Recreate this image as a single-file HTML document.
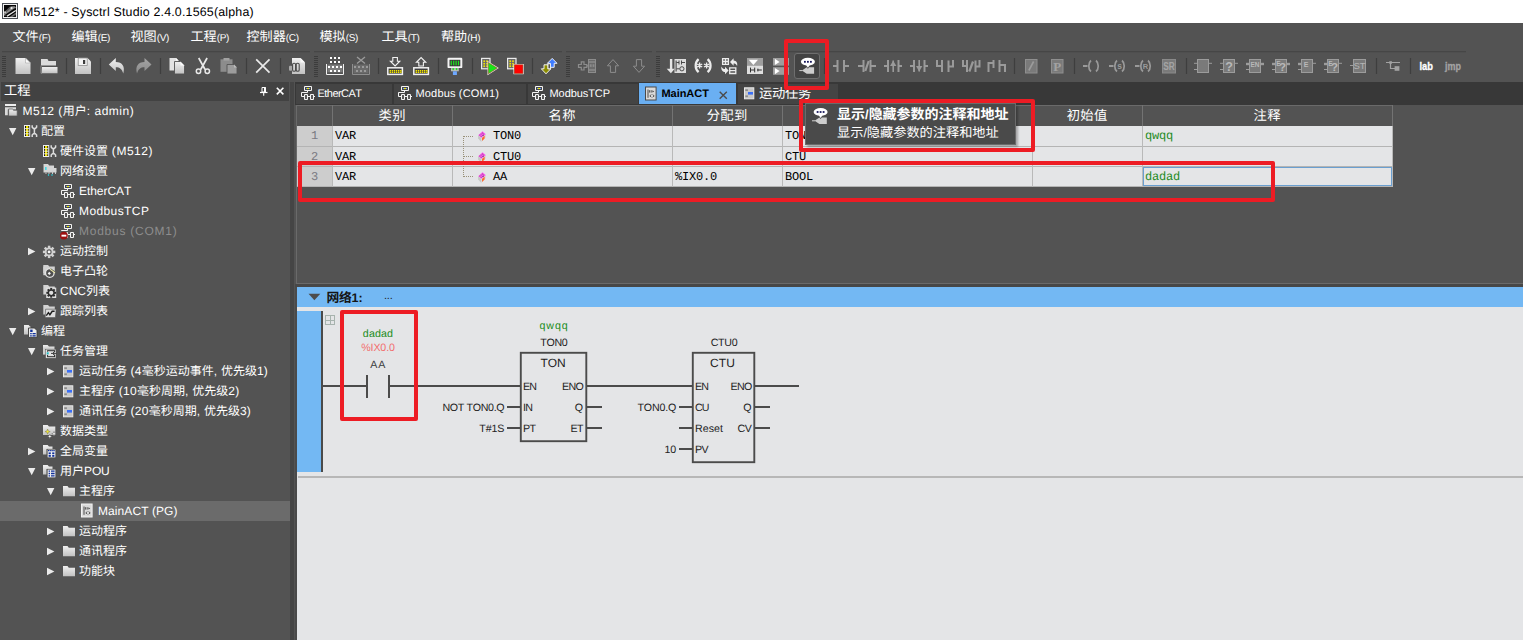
<!DOCTYPE html>
<html><head><meta charset="utf-8"><title>M512* - Sysctrl Studio</title>
<style>
html,body{margin:0;padding:0}
body{width:1523px;height:640px;overflow:hidden;background:#535353;font-family:"Liberation Sans",sans-serif;position:relative}
.a{position:absolute}
.t{position:absolute;white-space:nowrap;font-kerning:none;text-rendering:geometricPrecision}
.h{font-family:"Liberation Sans","Noto Sans CJK SC",sans-serif;letter-spacing:0}
</style></head><body>
<div class="a" style="left:0px;top:0px;width:1523px;height:23px;background:#fff;"></div><svg class="a" style="left:2px;top:3px;" width="16" height="16" viewBox="0 0 16 16"><rect x="0.5" y="0.5" width="15" height="15" fill="#f0f0f0" stroke="#4c5056"/><rect x="2" y="2" width="12" height="12" fill="#050505"/><path d="M2 10.5L9.5 3.2H12.8L14 4.6L5.5 12.6H2Z" fill="#8c8c8c"/><path d="M8 3.6L11 3.3L4 9.5L2.3 9Z" fill="#5a5a5a"/><circle cx="9.5" cy="5" r="1.1" fill="#f4f4f4"/><circle cx="3" cy="9.2" r="0.9" fill="#d8d8d8"/><path d="M3.5 12.3L13 6" stroke="#0a0a0a" stroke-width="1.5"/><path d="M5 13.3L13.8 7.6" stroke="#f2f2f2" stroke-width="1.2"/><path d="M7.5 14L14 9.5V14Z" fill="#6a6a6a"/><path d="M10.5 14L14 11.5V14Z" fill="#1a1a1a"/></svg><div class="t" style="left:23px;top:2px;height:20px;line-height:20px;font-size:12.4px;color:#000;letter-spacing:0.192px;">M512* - Sysctrl Studio 2.4.0.1565(alpha)</div><div class="t" style="left:12.5px;top:27.3px;height:20px;line-height:20px;font-size:12px;color:#fff"><span class="h" style="font-size:13.1px">文件</span><span style="font-size:10px;letter-spacing:-0.3px">(F)</span></div><div class="t" style="left:71.5px;top:27.3px;height:20px;line-height:20px;font-size:12px;color:#fff"><span class="h" style="font-size:13.1px">编辑</span><span style="font-size:10px;letter-spacing:-0.3px">(E)</span></div><div class="t" style="left:130.5px;top:27.3px;height:20px;line-height:20px;font-size:12px;color:#fff"><span class="h" style="font-size:13.1px">视图</span><span style="font-size:10px;letter-spacing:-0.3px">(V)</span></div><div class="t" style="left:190.5px;top:27.3px;height:20px;line-height:20px;font-size:12px;color:#fff"><span class="h" style="font-size:13.1px">工程</span><span style="font-size:10px;letter-spacing:-0.3px">(P)</span></div><div class="t" style="left:246.5px;top:27.3px;height:20px;line-height:20px;font-size:12px;color:#fff"><span class="h" style="font-size:13.1px">控制器</span><span style="font-size:10px;letter-spacing:-0.3px">(C)</span></div><div class="t" style="left:319.5px;top:27.3px;height:20px;line-height:20px;font-size:12px;color:#fff"><span class="h" style="font-size:13.1px">模拟</span><span style="font-size:10px;letter-spacing:-0.3px">(S)</span></div><div class="t" style="left:381.5px;top:27.3px;height:20px;line-height:20px;font-size:12px;color:#fff"><span class="h" style="font-size:13.1px">工具</span><span style="font-size:10px;letter-spacing:-0.3px">(T)</span></div><div class="t" style="left:441px;top:27.3px;height:20px;line-height:20px;font-size:12px;color:#fff"><span class="h" style="font-size:13.1px">帮助</span><span style="font-size:10px;letter-spacing:-0.3px">(H)</span></div><svg class="a" style="left:0px;top:51px;" width="1523" height="31" viewBox="0 51 1523 31"><defs><linearGradient id="lg" x1="0" y1="0" x2="0" y2="1"><stop offset="0" stop-color="#f0f0f0"/><stop offset="1" stop-color="#c2c2c2"/></linearGradient><linearGradient id="lgd" x1="0" y1="0" x2="0" y2="1"><stop offset="0" stop-color="#a5a5a5"/><stop offset="1" stop-color="#8a8a8a"/></linearGradient><linearGradient id="ai" x1="0" y1="0" x2="1" y2="1"><stop offset="0" stop-color="#000"/><stop offset="0.5" stop-color="#8a8a8a"/><stop offset="1" stop-color="#000"/></linearGradient></defs><path d="M2 51.5H310" stroke="#464646" stroke-width="1.4"/><path d="M314 51.5H562" stroke="#464646" stroke-width="1.4"/><path d="M566 51.5H652" stroke="#464646" stroke-width="1.4"/><path d="M656 51.5H1466" stroke="#464646" stroke-width="1.4"/><path d="M4 56V78" stroke="#3c3c3c" stroke-width="4" stroke-dasharray="1 1"/><path d="M316 56V78" stroke="#3c3c3c" stroke-width="4" stroke-dasharray="1 1"/><path d="M568 56V78" stroke="#3c3c3c" stroke-width="4" stroke-dasharray="1 1"/><path d="M658 56V78" stroke="#3c3c3c" stroke-width="4" stroke-dasharray="1 1"/><path d="M66.5 58V74" stroke="#3e3e3e" stroke-width="1.2"/><path d="M100.5 58V74" stroke="#3e3e3e" stroke-width="1.2"/><path d="M160.5 58V74" stroke="#3e3e3e" stroke-width="1.2"/><path d="M246.5 58V74" stroke="#3e3e3e" stroke-width="1.2"/><path d="M280.5 58V74" stroke="#3e3e3e" stroke-width="1.2"/><path d="M378.5 58V74" stroke="#3e3e3e" stroke-width="1.2"/><path d="M438.5 58V74" stroke="#3e3e3e" stroke-width="1.2"/><path d="M472.5 58V74" stroke="#3e3e3e" stroke-width="1.2"/><path d="M532.5 58V74" stroke="#3e3e3e" stroke-width="1.2"/><path d="M824.5 58V74" stroke="#3e3e3e" stroke-width="1.2"/><path d="M1014.5 58V74" stroke="#3e3e3e" stroke-width="1.2"/><path d="M1074.5 58V74" stroke="#3e3e3e" stroke-width="1.2"/><path d="M1186.5 58V74" stroke="#3e3e3e" stroke-width="1.2"/><path d="M1376.5 58V74" stroke="#3e3e3e" stroke-width="1.2"/><path d="M1410.5 58V74" stroke="#3e3e3e" stroke-width="1.2"/><g transform="translate(15.5,58)"><path d="M0 0H10L15 5V16H0Z" fill="url(#lg)"/><path d="M10 0V5H15Z" fill="#fafafa" stroke="#a8a8a8" stroke-width="0.6"/></g><g transform="translate(40.5,58)"><path d="M0.5 1H7L8 3H15.5V7.5H0.5Z" fill="#dcdcdc"/><path d="M1.5 9H17V15.3H1Z" fill="url(#lg)"/><path d="M0.5 7.5V15.3H1.5" stroke="#8a8a8a" fill="none"/></g><g transform="translate(75,58)"><path d="M0 0H12.5L16 3.5V16H0Z" fill="url(#lg)"/><rect x="3.2" y="0" width="9" height="7.5" fill="#f4f4f4" stroke="#8f8f8f" stroke-width="0.8"/><rect x="8" y="2" width="2.2" height="4" fill="#3c3c3c"/></g><g transform="translate(108.8,58)"><path d="M0 6.5L7 0V4C13.5 4 16.5 8.5 14.5 15.5C13 11 11 9.3 7 9.3V13Z" fill="url(#lg)"/></g><g transform="translate(151.5,58) scale(-1,1)"><path d="M0 6.5L7 0V4C13.5 4 16.5 8.5 14.5 15.5C13 11 11 9.3 7 9.3V13Z" fill="url(#lgd)"/></g><g transform="translate(169.5,58)"><path d="M0 0H6.5L9 2.5V12.5H0Z" fill="#e3e3e3"/><path d="M6.5 0V2.5H9Z" fill="#fff"/><path d="M5 3.5H11L15 7.5V16H5Z" fill="url(#lg)" stroke="#535353" stroke-width="0.9"/><path d="M11 3.5V7.5H15Z" fill="#fbfbfb"/></g><g transform="translate(195.5,58)"><path d="M3.2 0L9.6 11.5M11.6 0L5.2 11.5" stroke="#e9e9e9" stroke-width="1.7" fill="none"/><circle cx="3" cy="13.2" r="2.2" fill="none" stroke="#e9e9e9" stroke-width="1.5"/><circle cx="11.8" cy="13.2" r="2.2" fill="none" stroke="#e9e9e9" stroke-width="1.5"/></g><g transform="translate(220.5,58)"><rect x="0" y="1.3" width="12" height="12.5" fill="#8c8c8c"/><rect x="3" y="0" width="6" height="2.6" fill="#a2a2a2"/><path d="M6.5 6.5H13.5L16.5 9.5V16H6.5Z" fill="#9c9c9c" stroke="#535353" stroke-width="0.9"/><path d="M13.5 6.5V9.5H16.5Z" fill="#bdbdbd"/></g><g transform="translate(255.5,58.7)"><path d="M0.7 0.7L14 14M14 0.7L0.7 14" stroke="#e9e9e9" stroke-width="1.7"/></g><g transform="translate(289,58)"><path d="M3 0H11.5L16 4.5V16H3Z" fill="url(#lg)"/><path d="M11.5 0V4.5H16Z" fill="#fbfbfb"/><rect x="0" y="7.8" width="3.2" height="5" rx="1" fill="#a8a8a8"/><rect x="3.6" y="5.3" width="3" height="8" rx="1.3" fill="none" stroke="#4a4a4a" stroke-width="1.1"/><rect x="7.2" y="5.3" width="3" height="8" rx="1.3" fill="none" stroke="#4a4a4a" stroke-width="1.1"/></g><g transform="translate(326,56.5)"><rect x="4" y="0.5" width="2" height="2" fill="#fff"/><rect x="8" y="0.5" width="2" height="2" fill="#fff"/><rect x="12" y="0.5" width="2" height="2" fill="#fff"/><rect x="4" y="4.5" width="2" height="2" fill="#fff"/><rect x="8" y="4.5" width="2" height="2" fill="#fff"/><rect x="12" y="4.5" width="2" height="2" fill="#fff"/><rect x="1.5" y="8" width="15" height="9" fill="#7c7c7c"/><path d="M0.5 7.5V18H17.5V7.5" stroke="#f0f0f0" fill="none"/><path d="M1.5 16.5H16.5" stroke="#3c3c3c"/><rect x="2" y="9.5" width="2" height="2" fill="#fff"/><rect x="6" y="9.5" width="2" height="2" fill="#fff"/><rect x="10" y="9.5" width="2" height="2" fill="#fff"/><rect x="14" y="9.5" width="2" height="2" fill="#fff"/><rect x="4" y="13.5" width="2" height="2" fill="#fff"/><rect x="8" y="13.5" width="2" height="2" fill="#fff"/><rect x="12" y="13.5" width="2" height="2" fill="#fff"/></g><g transform="translate(352,56.5)"><path d="M5 0.5L13 7M13 0.5L5 7" stroke="#9c9c9c" stroke-width="1.3"/><rect x="1.5" y="8" width="15" height="9" fill="#6b6b6b"/><path d="M0.5 7.5V18H17.5V7.5" stroke="#8e8e8e" fill="none"/><rect x="2" y="9.5" width="2" height="2" fill="#9a9a9a"/><rect x="6" y="9.5" width="2" height="2" fill="#9a9a9a"/><rect x="10" y="9.5" width="2" height="2" fill="#9a9a9a"/><rect x="14" y="9.5" width="2" height="2" fill="#9a9a9a"/><rect x="4" y="13.5" width="2" height="2" fill="#9a9a9a"/><rect x="8" y="13.5" width="2" height="2" fill="#9a9a9a"/><rect x="12" y="13.5" width="2" height="2" fill="#9a9a9a"/></g><g transform="translate(387,57)"><path d="M5.8 0.5H10.4V4.2H12.8L8.1 9L3.4 4.2H5.8Z" fill="none" stroke="#f2f2f2" stroke-width="1.1"/><rect x="0.8" y="10.8" width="14.6" height="6.6" fill="#3e3e3e" stroke="#f2f2f2" stroke-width="1.5"/><rect x="2.6" y="13" width="1.4" height="1.4" fill="#f2e400"/><rect x="4.7" y="13" width="1.4" height="1.4" fill="#f2e400"/><rect x="6.8" y="13" width="1.4" height="1.4" fill="#f2e400"/><rect x="8.9" y="13" width="1.4" height="1.4" fill="#f2e400"/><rect x="11" y="13" width="1.4" height="1.4" fill="#f2e400"/><rect x="13.1" y="13" width="1.4" height="1.4" fill="#f2e400"/><rect x="2.6" y="14.6" width="1.4" height="1.4" fill="#f2e400"/><rect x="4.7" y="14.6" width="1.4" height="1.4" fill="#f2e400"/><rect x="6.8" y="14.6" width="1.4" height="1.4" fill="#f2e400"/><rect x="8.9" y="14.6" width="1.4" height="1.4" fill="#f2e400"/><rect x="11" y="14.6" width="1.4" height="1.4" fill="#f2e400"/><rect x="13.1" y="14.6" width="1.4" height="1.4" fill="#f2e400"/></g><g transform="translate(413,57)"><path d="M5.8 9H10.4V5.3H12.8L8.1 0.5L3.4 5.3H5.8Z" fill="none" stroke="#f2f2f2" stroke-width="1.1"/><rect x="0.8" y="10.8" width="14.6" height="6.6" fill="#3e3e3e" stroke="#f2f2f2" stroke-width="1.5"/><rect x="2.6" y="13" width="1.4" height="1.4" fill="#f2e400"/><rect x="4.7" y="13" width="1.4" height="1.4" fill="#f2e400"/><rect x="6.8" y="13" width="1.4" height="1.4" fill="#f2e400"/><rect x="8.9" y="13" width="1.4" height="1.4" fill="#f2e400"/><rect x="11" y="13" width="1.4" height="1.4" fill="#f2e400"/><rect x="13.1" y="13" width="1.4" height="1.4" fill="#f2e400"/><rect x="2.6" y="14.6" width="1.4" height="1.4" fill="#f2e400"/><rect x="4.7" y="14.6" width="1.4" height="1.4" fill="#f2e400"/><rect x="6.8" y="14.6" width="1.4" height="1.4" fill="#f2e400"/><rect x="8.9" y="14.6" width="1.4" height="1.4" fill="#f2e400"/><rect x="11" y="14.6" width="1.4" height="1.4" fill="#f2e400"/><rect x="13.1" y="14.6" width="1.4" height="1.4" fill="#f2e400"/></g><g transform="translate(447.5,57.8)"><rect x="0" y="0" width="14.8" height="10.3" rx="1.2" fill="#f4f4f4"/><rect x="2" y="2" width="10.8" height="6.5" fill="#3a3a3a"/><path d="M3.8 3V7.5M6.2 3V7.5M8.6 3V7.5M11 3V7.5" stroke="#1fe31f" stroke-width="1.2"/><rect x="3.5" y="10.3" width="7.8" height="3.2" fill="#b9b9b9"/><rect x="5" y="10.3" width="1.4" height="2" fill="#1fe31f"/><rect x="8.4" y="10.3" width="1.4" height="2" fill="#1fe31f"/><rect x="5.4" y="13.5" width="4" height="3.7" fill="#6ea8ff"/></g><g transform="translate(481,57.8)"><rect x="0.6" y="0.6" width="8.4" height="10.4" fill="#6a6a6a" stroke="#ececec" stroke-width="1.2"/><rect x="2.4" y="2.6" width="1.6" height="1.6" fill="#f2e400"/><rect x="5.2" y="2.6" width="1.6" height="1.6" fill="#f2e400"/><rect x="2.4" y="5.1" width="1.6" height="1.6" fill="#f2e400"/><rect x="5.2" y="5.1" width="1.6" height="1.6" fill="#f2e400"/><rect x="2.4" y="7.6" width="1.6" height="1.6" fill="#f2e400"/><rect x="5.2" y="7.6" width="1.6" height="1.6" fill="#f2e400"/><path d="M7.3 4.6L16.3 10.3L7.3 16Z" fill="#19e619" stroke="#fff" stroke-width="1.6"/><path d="M7.3 4.6L16.3 10.3L7.3 16Z" fill="#19e619" stroke="#a0401a" stroke-width="0.6"/></g><g transform="translate(507,57.8)"><rect x="0.6" y="0.6" width="8.4" height="10.4" fill="#6a6a6a" stroke="#ececec" stroke-width="1.2"/><rect x="2.4" y="2.6" width="1.6" height="1.6" fill="#f2e400"/><rect x="5.2" y="2.6" width="1.6" height="1.6" fill="#f2e400"/><rect x="2.4" y="5.1" width="1.6" height="1.6" fill="#f2e400"/><rect x="5.2" y="5.1" width="1.6" height="1.6" fill="#f2e400"/><rect x="2.4" y="7.6" width="1.6" height="1.6" fill="#f2e400"/><rect x="5.2" y="7.6" width="1.6" height="1.6" fill="#f2e400"/><rect x="7.3" y="7" width="8.6" height="8.6" fill="#ff0000" stroke="#fff" stroke-width="1.6"/><rect x="7.3" y="7" width="8.6" height="8.6" fill="#ff0000" stroke="#a0401a" stroke-width="0.6"/></g><g transform="translate(541,57.8)"><path d="M11.2 0.6L16 5.5H13.2V9.5H9.2V5.5H6.4Z" fill="#3f7cff" stroke="#fff" stroke-width="0.9"/><path d="M5 16L0.3 11H3V7H7V11H9.8Z" fill="#8c8c00" stroke="#fff" stroke-width="0.9"/><rect x="7" y="6" width="2.4" height="5" fill="#535353" stroke="#fff" stroke-width="0.8"/></g><g transform="translate(578,59)"><path d="M0.5 5.5H3.3V2.8H6V5.5H8.8V8.3H6V11H3.3V8.3H0.5ZM8.8 6.9H10" fill="none" stroke="#8c8c8c" stroke-width="1.2"/><rect x="10.5" y="0.5" width="7" height="13" fill="#6b6b6b" stroke="#8c8c8c"/><path d="M11 3H17M11 11H17" stroke="#8c8c8c" stroke-width="1.6"/><rect x="11.8" y="5.3" width="1.8" height="2.6" fill="#8c8c8c"/><rect x="14.6" y="5.3" width="1.8" height="2.6" fill="#8c8c8c"/></g><g transform="translate(607,59)"><path d="M6 0.6L11.6 6.8H8.6V13.4H3.4V6.8H0.4Z" fill="none" stroke="#8c8c8c"/></g><g transform="translate(633,59)"><path d="M6 13.4L11.6 7.2H8.6V0.6H3.4V7.2H0.4Z" fill="none" stroke="#8c8c8c"/></g><g transform="translate(666.5,59)"><path d="M4.6 0V11" stroke="#e6e6e6" stroke-width="2.4"/><path d="M0.2 9.8H8.2L4.4 14.2Z" fill="#e6e6e6"/><rect x="8" y="0" width="11.5" height="14" fill="#dcdcdc"/><path d="M9.6 1.5V12.5" stroke="#3a3a3a" stroke-width="1"/><path d="M10 3.5H12.5M12.5 1.5V5.5M15 1.5V5.5M15 3.5H18.5M10 9.8H13" stroke="#3a3a3a" stroke-width="0.9" fill="none"/><circle cx="15.4" cy="9.8" r="2.1" fill="none" stroke="#3a3a3a" stroke-width="0.9"/></g><g transform="translate(694,59)"><path d="M4.6 0.2C0.7 3.6 0.7 9.8 4.6 13.2M13.6 0.2C17.5 3.6 17.5 9.8 13.6 13.2" stroke="#ececec" stroke-width="2.3" fill="none"/><path d="M0 -2.9V2.9M-2.6 -1.5L2.6 1.5M2.6 -1.5L-2.6 1.5" transform="translate(5.6,6.5)" stroke="#ececec" stroke-width="1.4"/><path d="M0 -2.9V2.9M-2.6 -1.5L2.6 1.5M2.6 -1.5L-2.6 1.5" transform="translate(12.6,6.5)" stroke="#ececec" stroke-width="1.4"/></g><g transform="translate(721,58)"><path d="M1.6 0.6H7.4V6.4H1.6ZM4.5 0.6V6.4M1.6 3.5H7.4" stroke="#ececec" stroke-width="1.3" fill="none"/><path d="M9 4L12.6 0.3V2.4C15.6 2.6 16.8 5 16.1 7.9C15.1 5.9 14.2 5.4 12.6 5.4V7.7Z" fill="#ececec"/><path d="M7.6 12.5L4 16.2V14.1C1.2 13.9 -0.1 11.5 0.4 8.5C1.4 10.6 2.4 11.1 4 11.1V8.8Z" fill="#ececec"/><path d="M8.7 9.8H14.8V15.5H8.7ZM8.7 12.65H14.8" stroke="#ececec" stroke-width="1.3" fill="none"/></g><g transform="translate(747,58)"><rect x="0" y="0" width="16" height="7.5" fill="#9e9e9e"/><path d="M1.8 1.8H11L6.4 6.9Z" fill="#fff"/><rect x="0" y="7.5" width="16" height="8.5" fill="#dedede"/><path d="M3.5 9.6V14.4M3.5 12H7.7M7.7 9.6V14.4M10.4 12H14.8M10.9 10.6V13.4" stroke="#2e2e2e" stroke-width="1" fill="none"/></g><g transform="translate(773,58)"><rect x="0" y="0" width="16" height="7.6" fill="#9e9e9e"/><path d="M1.9 0.8V7L6.6 3.9Z" fill="#fff"/><rect x="0" y="9.2" width="16" height="7.6" fill="#9e9e9e"/><path d="M1.9 10V16.2L6.6 13.1Z" fill="#fff"/></g><rect x="794.5" y="53.5" width="25" height="25" rx="2.5" fill="#434343" stroke="#6e6e6e"/><g transform="translate(799.3,57.8)"><ellipse cx="8.6" cy="3.9" rx="7" ry="3.9" fill="#fff"/><path d="M6.3 6.5L8.6 10L11 6.5Z" fill="#fff"/><rect x="4.7" y="3.1" width="1.8" height="1.8" fill="#14145a"/><rect x="7.7" y="3.1" width="1.8" height="1.8" fill="#14145a"/><rect x="10.7" y="3.1" width="1.8" height="1.8" fill="#14145a"/><path d="M0 12.8H3" stroke="#d0d0d0" stroke-width="1"/><path d="M2.6 12.8L7.4 9.4L8.6 11L9.8 9.4H14.8V16H7.4Z" fill="#cdcdcd"/></g><g transform="translate(833,60)"><path d="M0 6H4.5M4.5 0V12M11 0V12M11 6H16" stroke="#9a9a9a" stroke-width="2" fill="none"/></g><g transform="translate(858,60)"><path d="M0 6H5.5M5.5 0V12M12.5 0V12M12.5 6H18" stroke="#9a9a9a" stroke-width="2" fill="none"/><path d="M7.3 11L10.7 1" stroke="#9a9a9a" stroke-width="2.2"/></g><g transform="translate(884,60)"><path d="M0 6H4M4 0V12M14.5 0V12M14.5 6H18" stroke="#9a9a9a" stroke-width="2" fill="none"/><path d="M9.2 0.5V12" stroke="#9a9a9a" stroke-width="1.6"/><path d="M6 6L9.2 0.8L12.4 6Z" fill="#9a9a9a"/></g><g transform="translate(910,60)"><path d="M0 6H4M4 0V12M14.5 0V12M14.5 6H18" stroke="#9a9a9a" stroke-width="2" fill="none"/><path d="M9.2 0V11.5" stroke="#9a9a9a" stroke-width="1.6"/><path d="M6 6L9.2 11.5L12.4 6Z" fill="#9a9a9a"/></g><g transform="translate(936,60)"><path d="M1 0V6H6M6 0V12M12.5 0.5V12M12.5 6.5H17V0" stroke="#9a9a9a" stroke-width="2" fill="none"/></g><g transform="translate(962,60)"><path d="M1 0V6H5M5 0V12M13.5 0.5V12M13.5 6.5H17.5V0" stroke="#9a9a9a" stroke-width="2" fill="none"/><path d="M7.3 11.5L11 1.5" stroke="#9a9a9a" stroke-width="2.2"/></g><g transform="translate(987.5,60)"><path d="M1 12V3H6M6 0V8M12 0V12M12 5H17.5V12" stroke="#9a9a9a" stroke-width="2" fill="none"/></g><g transform="translate(1025,59)"><rect x="0.5" y="0.5" width="11.5" height="13.5" fill="#7a7a7a" stroke="#8f8f8f"/><path d="M3.8 11.5L8.6 2.5" stroke="#9c9c9c" stroke-width="1.6"/></g><g transform="translate(1051,59)"><rect x="0.5" y="0.5" width="11.5" height="13.5" fill="#7a7a7a" stroke="#8f8f8f"/><text x="6.3" y="11.6" font-family="Liberation Serif" font-weight="bold" font-size="13" fill="#a2a2a2" text-anchor="middle">P</text></g><g transform="translate(1083,59.5)"><path d="M0 6.5H4.5" stroke="#9a9a9a" stroke-width="2"/><path d="M8 1C5 3.5 5 9.5 8 12M13 1C16 3.5 16 9.5 13 12" stroke="#9a9a9a" stroke-width="1.7" fill="none"/></g><g transform="translate(1109,59.5)"><path d="M0 6.5H4.5" stroke="#9a9a9a" stroke-width="2"/><path d="M8 1C5 3.5 5 9.5 8 12M13 1C16 3.5 16 9.5 13 12" stroke="#9a9a9a" stroke-width="1.7" fill="none"/><text x="10.5" y="9.6" font-family="Liberation Sans" font-weight="bold" font-size="8.5" fill="#9a9a9a" text-anchor="middle">s</text></g><g transform="translate(1135,59.5)"><path d="M0 6.5H4.5" stroke="#9a9a9a" stroke-width="2"/><path d="M8 1C5 3.5 5 9.5 8 12M13 1C16 3.5 16 9.5 13 12" stroke="#9a9a9a" stroke-width="1.7" fill="none"/><text x="10.5" y="9.4" font-family="Liberation Sans" font-weight="bold" font-size="7.5" fill="#9a9a9a" text-anchor="middle">R</text></g><g transform="translate(1162,59)"><rect x="0.5" y="0.5" width="13" height="13.5" fill="#7a7a7a" stroke="#8a8a8a"/><text x="7" y="11" font-family="Liberation Sans" font-weight="bold" font-size="10.5" fill="#a4a4a4" text-anchor="middle" textLength="11.5" lengthAdjust="spacingAndGlyphs">SR</text></g><g transform="translate(1194,59)"><rect x="3.5" y="0.5" width="11" height="13" fill="#7a7a7a" stroke="#9c9c9c"/><path d="M0 4.3 H3.5" stroke="#9c9c9c" stroke-width="1"/><path d="M0 10.5H3.5" stroke="#9c9c9c"/><path d="M14.5 4.3H18" stroke="#9c9c9c" stroke-width="1"/></g><g transform="translate(1220,59)"><rect x="3.5" y="0.5" width="11" height="13" fill="#7a7a7a" stroke="#9c9c9c"/><path d="M0 4.3 H3.5" stroke="#9c9c9c" stroke-width="1"/><path d="M0 10.5H3.5" stroke="#9c9c9c"/><path d="M14.5 4.3H18" stroke="#9c9c9c" stroke-width="1"/><text x="9" y="11.8" font-family="Liberation Sans" font-size="12.5" fill="#b8b8b8" text-anchor="middle" font-weight="bold">?</text></g><g transform="translate(1246,59)"><rect x="3.5" y="0.5" width="11" height="13" fill="#7a7a7a" stroke="#9c9c9c"/><path d="M0 5 H3.5" stroke="#9c9c9c" stroke-width="2.4"/><path d="M0 10.5H3.5" stroke="#9c9c9c"/><path d="M14.5 5H18" stroke="#9c9c9c" stroke-width="2.4"/><text x="9" y="7.6" font-family="Liberation Sans" font-size="6.5" fill="#b8b8b8" text-anchor="middle" font-weight="bold">EN</text></g><g transform="translate(1272,59)"><rect x="3.5" y="0.5" width="11" height="13" fill="#7a7a7a" stroke="#9c9c9c"/><path d="M0 5 H3.5" stroke="#9c9c9c" stroke-width="2.4"/><path d="M0 10.5H3.5" stroke="#9c9c9c"/><path d="M14.5 5H18" stroke="#9c9c9c" stroke-width="2.4"/><text x="6.3" y="7.3" font-family="Liberation Sans" font-size="6.5" fill="#b8b8b8" text-anchor="middle" font-weight="bold">E</text><text x="10.6" y="12.2" font-family="Liberation Sans" font-size="11.5" fill="#b8b8b8" text-anchor="middle" font-weight="bold">?</text></g><g transform="translate(1298,59)"><rect x="3.5" y="0.5" width="11" height="13" fill="#7a7a7a" stroke="#9c9c9c"/><path d="M0 5 H3.5" stroke="#9c9c9c" stroke-width="2.4"/><path d="M0 10.5H3.5" stroke="#9c9c9c"/><path d="M14.5 4.3H18" stroke="#9c9c9c" stroke-width="1"/><text x="8" y="7.8" font-family="Liberation Sans" font-size="7" fill="#b8b8b8" text-anchor="middle" font-weight="bold">E</text></g><g transform="translate(1324,59)"><rect x="3.5" y="0.5" width="11" height="13" fill="#7a7a7a" stroke="#9c9c9c"/><path d="M0 5 H3.5" stroke="#9c9c9c" stroke-width="2.4"/><path d="M0 10.5H3.5" stroke="#9c9c9c"/><path d="M14.5 4.3H18" stroke="#9c9c9c" stroke-width="1"/><text x="6.3" y="7.3" font-family="Liberation Sans" font-size="6.5" fill="#b8b8b8" text-anchor="middle" font-weight="bold">E</text><text x="10.6" y="12.2" font-family="Liberation Sans" font-size="11.5" fill="#b8b8b8" text-anchor="middle" font-weight="bold">?</text></g><g transform="translate(1350,59)"><path d="M0 6.5H3.5" stroke="#9c9c9c"/><rect x="3.5" y="0.5" width="12" height="13" fill="#7a7a7a" stroke="#9c9c9c"/><text x="9.5" y="10.3" font-family="Liberation Sans" font-size="9.5" fill="#b4b4b4" text-anchor="middle">ST</text></g><g transform="translate(1386,61)"><path d="M0 1.5H14M4.5 1.5V7.5H9" stroke="#a2a2a2" fill="none" stroke-width="1.2"/><rect x="3.3" y="0.2" width="2.6" height="2.6" fill="#a2a2a2"/><rect x="8.6" y="5.2" width="4.8" height="4.6" fill="#a2a2a2"/></g><text x="1419.5" y="70.3" font-family="Liberation Sans" font-weight="bold" font-size="11.5" fill="#fff" stroke="#fff" stroke-width="0.3" textLength="13.5" lengthAdjust="spacingAndGlyphs">lab</text><text x="1445" y="69.8" font-family="Liberation Sans" font-weight="bold" font-size="11" fill="#a3a3a3" stroke="#a3a3a3" stroke-width="0.3" textLength="16" lengthAdjust="spacingAndGlyphs">jmp</text></svg><div class="a" style="left:1px;top:82px;width:288px;height:19px;background:#424242;"></div><div class="t" style="left:4px;top:81px;height:19px;line-height:19px;font-size:13.3px;color:#fff;"><span class="h">工程</span></div><svg class="a" style="left:259.8px;top:87px;" width="8" height="9" viewBox="0 0 8 9"><path d="M2 0.5H5.5V5H2Z" fill="none" stroke="#fff" stroke-width="1"/><rect x="4" y="0.5" width="2" height="4.5" fill="#fff"/><path d="M0 5.5H7.5" stroke="#fff" stroke-width="1.2"/><path d="M3.7 6V8.8" stroke="#fff" stroke-width="1.1"/></svg><svg class="a" style="left:276px;top:86.5px;" width="10" height="10" viewBox="0 0 10 10"><path d="M0.8 0.8L7.4 7.4M7.4 0.8L0.8 7.4" stroke="#fff" stroke-width="1.6"/></svg><div class="a" style="left:290px;top:82px;width:4px;height:558px;background:#454545;"></div><div class="a" style="left:296px;top:105px;width:1px;height:178px;background:#6a6a6a;"></div><svg class="a" style="left:5px;top:103px;overflow:visible" width="17" height="17" viewBox="0 0 17 17"><rect x="0" y="1" width="11" height="2" fill="#efefef"/><path d="M0 4.2H11V6.5H2.8V12.3H0Z" fill="#dadada"/><path d="M3.6 6H7.4L8.6 7.2H12.2V13H3.6Z" fill="url(#lg)" stroke="#535353" stroke-width="0.7"/></svg><div class="t" style="left:22.5px;top:100.5px;height:20px;line-height:20px;font-size:12px;color:#fff;letter-spacing:0.493px;">M512 (<span class="h">用户</span>: admin)</div><svg class="a" style="left:9px;top:121px;" width="12" height="20" viewBox="0 0 12 20"><path d="M0 7H7.4L3.7 14.2Z" fill="#ebebeb"/></svg><svg class="a" style="left:24px;top:123px;overflow:visible" width="17" height="17" viewBox="0 0 17 17"><g transform="translate(0,1)"><rect x="0.5" y="1.5" width="5.2" height="11" fill="#111" stroke="#efefef"/><rect x="2" y="2" width="2.3" height="10" fill="#f2e400"/><path d="M1 4.6H5.3M1 7.2H5.3M1 9.8H5.3" stroke="#efefef" stroke-width="0.9"/><path d="M8.2 1.2V3.2L9.4 4.4H11.4L12.6 3.2V1.2M10.4 4.4V9.8M8.2 13V11L9.4 9.8H11.4L12.6 11V13" stroke="#dcdcdc" stroke-width="1.5" fill="none"/></g></svg><div class="t" style="left:41px;top:120.5px;height:20px;line-height:20px;font-size:12px;color:#fff;"><span class="h">配置</span></div><svg class="a" style="left:43px;top:143px;overflow:visible" width="17" height="17" viewBox="0 0 17 17"><g transform="translate(0,1)"><rect x="0.5" y="1.5" width="5.2" height="11" fill="#111" stroke="#efefef"/><rect x="2" y="2" width="2.3" height="10" fill="#f2e400"/><path d="M1 4.6H5.3M1 7.2H5.3M1 9.8H5.3" stroke="#efefef" stroke-width="0.9"/><path d="M8.2 1.2V3.2L9.4 4.4H11.4L12.6 3.2V1.2M10.4 4.4V9.8M8.2 13V11L9.4 9.8H11.4L12.6 11V13" stroke="#dcdcdc" stroke-width="1.5" fill="none"/></g></svg><div class="t" style="left:60px;top:140.5px;height:20px;line-height:20px;font-size:12px;color:#fff;letter-spacing:0.522px;"><span class="h">硬件设置</span> (M512)</div><svg class="a" style="left:28px;top:161px;" width="12" height="20" viewBox="0 0 12 20"><path d="M0 7H7.4L3.7 14.2Z" fill="#ebebeb"/></svg><svg class="a" style="left:43px;top:163px;overflow:visible" width="17" height="17" viewBox="0 0 17 17"><path d="M0.5 1H5L6.2 2.6H11V5H13.5V9.5H0.5Z" fill="#d6d6d6"/><rect x="2.2" y="4" width="1.3" height="3" fill="#29d7e6"/><path d="M3 9.5V11M6 8.5V11M9.5 8.5V11M12.5 9V11" stroke="#c8c8c8"/><path d="M5.5 11.2V12.8M9 11.2V12.8" stroke="#29d7e6" stroke-width="1.2"/></svg><div class="t" style="left:60px;top:160.5px;height:20px;line-height:20px;font-size:12px;color:#fff;"><span class="h">网络设置</span></div><svg class="a" style="left:62px;top:183px;overflow:visible" width="17" height="17" viewBox="0 0 17 17"><g transform="translate(-1,1)"><path d="M3.5 0.5H10.5V4.5H3.5Z" fill="#4a4a4a" stroke="#f4f4f4"/><rect x="5" y="2" width="4" height="1" fill="#6ea0ff"/><rect x="6" y="2" width="2" height="1" fill="#f4ec00"/><path d="M6.5 5V6.5H0.5V10.5H3" stroke="#f4f4f4" fill="none"/><path d="M3.5 8.5H6.5V13.5H3.5ZM9.5 8.5H12.5V13.5H9.5Z" fill="#5a5a5a" stroke="#f4f4f4"/><path d="M7 10.5H9M13 10.5H14" stroke="#f4f4f4"/></g></svg><div class="t" style="left:79px;top:180.5px;height:20px;line-height:20px;font-size:12px;color:#fff;letter-spacing:-0.048px;">EtherCAT</div><svg class="a" style="left:62px;top:203px;overflow:visible" width="17" height="17" viewBox="0 0 17 17"><g transform="translate(-1,1)"><path d="M3.5 0.5H10.5V4.5H3.5Z" fill="#4a4a4a" stroke="#f4f4f4"/><rect x="5" y="2" width="4" height="1" fill="#6ea0ff"/><rect x="6" y="2" width="2" height="1" fill="#f4ec00"/><path d="M6.5 5V6.5H0.5V10.5H3" stroke="#f4f4f4" fill="none"/><path d="M3.5 8.5H6.5V13.5H3.5ZM9.5 8.5H12.5V13.5H9.5Z" fill="#5a5a5a" stroke="#f4f4f4"/><path d="M7 10.5H9M13 10.5H14" stroke="#f4f4f4"/></g></svg><div class="t" style="left:79px;top:200.5px;height:20px;line-height:20px;font-size:12px;color:#fff;letter-spacing:0.401px;">ModbusTCP</div><svg class="a" style="left:62px;top:223px;overflow:visible" width="17" height="17" viewBox="0 0 17 17"><g transform="translate(-1,1)"><path d="M3.5 0.5H10.5V4.5H3.5Z" fill="#4a4a4a" stroke="#f4f4f4"/><rect x="5" y="2" width="4" height="1" fill="#6ea0ff"/><rect x="6" y="2" width="2" height="1" fill="#f4ec00"/><path d="M6.5 5V6.5H0.5V10.5H3" stroke="#f4f4f4" fill="none"/><path d="M3.5 8.5H6.5V13.5H3.5ZM9.5 8.5H12.5V13.5H9.5Z" fill="#5a5a5a" stroke="#f4f4f4"/><path d="M7 10.5H9M13 10.5H14" stroke="#f4f4f4"/></g><rect x="-2" y="8" width="6.5" height="9" fill="#535353"/><circle cx="1.9" cy="12.6" r="3.9" fill="#9c0f0f"/><rect x="-0.5" y="11.7" width="4.8" height="1.9" fill="#fff"/></svg><div class="t" style="left:79px;top:220.5px;height:20px;line-height:20px;font-size:12px;color:#8d8d8d;letter-spacing:0.755px;">Modbus (COM1)</div><svg class="a" style="left:28px;top:241px;" width="12" height="20" viewBox="0 0 12 20"><path d="M0 6.8V14.2L7.4 10.5Z" fill="#ebebeb"/></svg><svg class="a" style="left:43px;top:243px;overflow:visible" width="17" height="17" viewBox="0 0 17 17"><g transform="translate(6.1,8.9)"><rect x="-1.25" y="-6.2" width="2.5" height="3" fill="#d2d2d2" transform="rotate(0)"/><rect x="-1.25" y="-6.2" width="2.5" height="3" fill="#d2d2d2" transform="rotate(45)"/><rect x="-1.25" y="-6.2" width="2.5" height="3" fill="#d2d2d2" transform="rotate(90)"/><rect x="-1.25" y="-6.2" width="2.5" height="3" fill="#d2d2d2" transform="rotate(135)"/><rect x="-1.25" y="-6.2" width="2.5" height="3" fill="#d2d2d2" transform="rotate(180)"/><rect x="-1.25" y="-6.2" width="2.5" height="3" fill="#d2d2d2" transform="rotate(225)"/><rect x="-1.25" y="-6.2" width="2.5" height="3" fill="#d2d2d2" transform="rotate(270)"/><rect x="-1.25" y="-6.2" width="2.5" height="3" fill="#d2d2d2" transform="rotate(315)"/><circle r="4.4" fill="#d2d2d2"/><circle r="2" fill="#f4f4f4" stroke="#5a5a5a" stroke-width="1.1"/></g></svg><div class="t" style="left:60px;top:240.5px;height:20px;line-height:20px;font-size:12px;color:#fff;"><span class="h">运动控制</span></div><svg class="a" style="left:43px;top:263px;overflow:visible" width="17" height="17" viewBox="0 0 17 17"><g transform="translate(0,1)"><path d="M0.3 1H5L6.4 2.6H11.8V9H0.3Z" fill="#d2d2d2"/><path d="M0.3 2.6V11.3H3" fill="none" stroke="#d2d2d2" stroke-width="0.01"/><rect x="0.3" y="2.6" width="3" height="8.6" fill="#d2d2d2"/><circle cx="6.8" cy="9" r="4.3" fill="#4e4e4e" stroke="#e2e2e2" stroke-width="1.3"/><path d="M7.2 5.2L12 8.6" stroke="#eeeaa8" stroke-width="1.5"/><path d="M7.6 4.6L12.4 8" stroke="#4e4e4e" stroke-width="0.8"/><path d="M6.3 7.8L7.9 9.4L6.3 11L4.7 9.4Z" fill="#f4f4f4"/></g></svg><div class="t" style="left:60px;top:260.5px;height:20px;line-height:20px;font-size:12px;color:#fff;"><span class="h">电子凸轮</span></div><svg class="a" style="left:43px;top:283px;overflow:visible" width="17" height="17" viewBox="0 0 17 17"><g transform="translate(0,1)"><path d="M0.3 1H5L6.4 2.6H11.8V10.5H0.3Z" fill="#d2d2d2"/><rect x="3.2" y="3.6" width="10" height="10.4" fill="#dedede"/><g transform="translate(8.2,8.8)"><rect x="-1" y="-4.9" width="2" height="2" fill="#2e2e2e" transform="rotate(0)"/><rect x="-1" y="-4.9" width="2" height="2" fill="#2e2e2e" transform="rotate(45)"/><rect x="-1" y="-4.9" width="2" height="2" fill="#2e2e2e" transform="rotate(90)"/><rect x="-1" y="-4.9" width="2" height="2" fill="#2e2e2e" transform="rotate(135)"/><rect x="-1" y="-4.9" width="2" height="2" fill="#2e2e2e" transform="rotate(180)"/><rect x="-1" y="-4.9" width="2" height="2" fill="#2e2e2e" transform="rotate(225)"/><rect x="-1" y="-4.9" width="2" height="2" fill="#2e2e2e" transform="rotate(270)"/><rect x="-1" y="-4.9" width="2" height="2" fill="#2e2e2e" transform="rotate(315)"/><circle r="2.9" fill="#dedede" stroke="#2e2e2e" stroke-width="1.5"/></g></g></svg><div class="t" style="left:60px;top:280.5px;height:20px;line-height:20px;font-size:12px;color:#fff;letter-spacing:0.001px;">CNC<span class="h">列表</span></div><svg class="a" style="left:28px;top:301px;" width="12" height="20" viewBox="0 0 12 20"><path d="M0 6.8V14.2L7.4 10.5Z" fill="#ebebeb"/></svg><svg class="a" style="left:43px;top:303px;overflow:visible" width="17" height="17" viewBox="0 0 17 17"><g transform="translate(0,1)"><path d="M0.3 1H5L6.4 2.6H11.8V10.5H0.3Z" fill="#d2d2d2"/><path d="M2.6 5.2H13.2L12.4 13.6H2.2Z" fill="#dcdcdc" stroke="#535353" stroke-width="0.6"/><path d="M3.3 11.6L5.4 8.7L6.9 10.7L9.2 7.3H11.6" stroke="#1c1c1c" stroke-width="1.4" fill="none"/></g></svg><div class="t" style="left:60px;top:300.5px;height:20px;line-height:20px;font-size:12px;color:#fff;"><span class="h">跟踪列表</span></div><svg class="a" style="left:9px;top:321px;" width="12" height="20" viewBox="0 0 12 20"><path d="M0 7H7.4L3.7 14.2Z" fill="#ebebeb"/></svg><svg class="a" style="left:24px;top:323px;overflow:visible" width="17" height="17" viewBox="0 0 17 17"><g transform="translate(0,1)"><path d="M0 1H4.6L6 2.6H6.5V10.5H0Z" fill="url(#lg)"/><path d="M4.5 4H10.5L13 6.5V13.4H4.5Z" fill="#ececec" stroke="#3a3a3a" stroke-width="0.9"/><rect x="6.2" y="5.6" width="2.4" height="2.4" fill="#10309c"/><rect x="6.2" y="9" width="1.5" height="1.3" fill="#10309c"/><rect x="8.5" y="9" width="3.2" height="1.3" fill="#10309c"/><rect x="6.2" y="11.2" width="1.5" height="1.3" fill="#10309c"/><rect x="8.5" y="11.2" width="3.2" height="1.3" fill="#10309c"/></g></svg><div class="t" style="left:41px;top:320.5px;height:20px;line-height:20px;font-size:12px;color:#fff;"><span class="h">编程</span></div><svg class="a" style="left:28px;top:341px;" width="12" height="20" viewBox="0 0 12 20"><path d="M0 7H7.4L3.7 14.2Z" fill="#ebebeb"/></svg><svg class="a" style="left:43px;top:343px;overflow:visible" width="17" height="17" viewBox="0 0 17 17"><g transform="translate(0,1)"><path d="M0 1H4.6L6 2.6H11.5V6H0Z" fill="url(#lg)"/><rect x="0" y="5" width="3.2" height="5.6" fill="#cfcfcf"/><rect x="2.6" y="5.2" width="10.4" height="9" fill="#e2e2e2" stroke="#535353" stroke-width="0.5"/><rect x="4.6" y="6.7" width="7" height="6" fill="none" stroke="#2a2a2a" stroke-width="1"/><rect x="3.4" y="8" width="2.6" height="2.6" fill="#1cc0c8" stroke="#e2e2e2" stroke-width="0.6"/><path d="M8 9.4H11M10 8L11.6 9.4L10 10.8" stroke="#2a2a2a" stroke-width="0.9" fill="none"/><rect x="11" y="8.3" width="2" height="2.2" fill="#e2e2e2"/><path d="M10.6 9.4H13.4" stroke="#2a2a2a" stroke-width="0.9"/></g></svg><div class="t" style="left:60px;top:340.5px;height:20px;line-height:20px;font-size:12px;color:#fff;"><span class="h">任务管理</span></div><svg class="a" style="left:47px;top:361px;" width="12" height="20" viewBox="0 0 12 20"><path d="M0 6.8V14.2L7.4 10.5Z" fill="#ebebeb"/></svg><svg class="a" style="left:62px;top:363px;overflow:visible" width="17" height="17" viewBox="0 0 17 17"><g transform="translate(1,2.3)"><rect x="0.5" y="0.5" width="9.3" height="11" fill="#c7c7c7" stroke="#e9e9e9"/><rect x="1.3" y="2" width="2.6" height="1.7" fill="#8a8a8a"/><rect x="1.3" y="8.1" width="2.6" height="1.7" fill="#8a8a8a"/><rect x="4" y="4.7" width="5" height="2.6" fill="#3a6ff7"/></g></svg><div class="t" style="left:79px;top:360.5px;height:20px;line-height:20px;font-size:12px;color:#fff;letter-spacing:0.237px;"><span class="h">运动任务</span> (4<span class="h">毫秒运动事件</span>, <span class="h">优先级</span>1)</div><svg class="a" style="left:47px;top:381px;" width="12" height="20" viewBox="0 0 12 20"><path d="M0 6.8V14.2L7.4 10.5Z" fill="#ebebeb"/></svg><svg class="a" style="left:62px;top:383px;overflow:visible" width="17" height="17" viewBox="0 0 17 17"><g transform="translate(1,2.3)"><rect x="0.5" y="0.5" width="9.3" height="11" fill="#c7c7c7" stroke="#e9e9e9"/><rect x="1.3" y="2" width="2.6" height="1.7" fill="#8a8a8a"/><rect x="1.3" y="8.1" width="2.6" height="1.7" fill="#8a8a8a"/><rect x="4" y="4.7" width="5" height="2.6" fill="#3a6ff7"/></g></svg><div class="t" style="left:79px;top:380.5px;height:20px;line-height:20px;font-size:12px;color:#fff;letter-spacing:0.298px;"><span class="h">主程序</span> (10<span class="h">毫秒周期</span>, <span class="h">优先级</span>2)</div><svg class="a" style="left:47px;top:401px;" width="12" height="20" viewBox="0 0 12 20"><path d="M0 6.8V14.2L7.4 10.5Z" fill="#ebebeb"/></svg><svg class="a" style="left:62px;top:403px;overflow:visible" width="17" height="17" viewBox="0 0 17 17"><g transform="translate(1,2.3)"><rect x="0.5" y="0.5" width="9.3" height="11" fill="#c7c7c7" stroke="#e9e9e9"/><rect x="1.3" y="2" width="2.6" height="1.7" fill="#8a8a8a"/><rect x="1.3" y="8.1" width="2.6" height="1.7" fill="#8a8a8a"/><rect x="4" y="4.7" width="5" height="2.6" fill="#3a6ff7"/></g></svg><div class="t" style="left:79px;top:400.5px;height:20px;line-height:20px;font-size:12px;color:#fff;letter-spacing:0.248px;"><span class="h">通讯任务</span> (20<span class="h">毫秒周期</span>, <span class="h">优先级</span>3)</div><svg class="a" style="left:43px;top:423px;overflow:visible" width="17" height="17" viewBox="0 0 17 17"><g transform="translate(0,1)"><path d="M0 1H4.6L6 2.6H12.3V11H0Z" fill="url(#lg)"/><path d="M0 -2.6L0.7 -0.7L2.6 0L0.7 0.7L0 2.6L-0.7 0.7L-2.6 0L-0.7 -0.7Z" transform="translate(4.6,7.6)" fill="#f2e63c" stroke="#6a6a30" stroke-width="0.4"/><path d="M0 -2.6L0.7 -0.7L2.6 0L0.7 0.7L0 2.6L-0.7 0.7L-2.6 0L-0.7 -0.7Z" transform="translate(11,9.8) scale(0.9)" fill="#fff" stroke="#535353" stroke-width="0.5"/><path d="M0 -2.6L0.7 -0.7L2.6 0L0.7 0.7L0 2.6L-0.7 0.7L-2.6 0L-0.7 -0.7Z" transform="translate(6.8,12.4) scale(0.9)" fill="#fff" stroke="#535353" stroke-width="0.5"/></g></svg><div class="t" style="left:60px;top:420.5px;height:20px;line-height:20px;font-size:12px;color:#fff;"><span class="h">数据类型</span></div><svg class="a" style="left:28px;top:441px;" width="12" height="20" viewBox="0 0 12 20"><path d="M0 6.8V14.2L7.4 10.5Z" fill="#ebebeb"/></svg><svg class="a" style="left:43px;top:443px;overflow:visible" width="17" height="17" viewBox="0 0 17 17"><g transform="translate(0,1)"><path d="M0 1H4.6L6 2.6H9.5V5H3.5V10.5H0Z" fill="url(#lg)"/><rect x="4.2" y="5.2" width="8.6" height="8.6" fill="#efefef" stroke="#4a4a4a" stroke-width="0.6"/><path d="M5 6.7H12" stroke="#10309c" stroke-width="1.3" stroke-dasharray="1.5 0.6"/><rect x="5.6" y="8.4" width="2.2" height="1.8" fill="#10309c"/><rect x="9.2" y="8.4" width="2.2" height="1.8" fill="#10309c"/><rect x="5.6" y="11" width="2.2" height="1.8" fill="#10309c"/><rect x="9.2" y="11" width="2.2" height="1.8" fill="#10309c"/></g></svg><div class="t" style="left:60px;top:440.5px;height:20px;line-height:20px;font-size:12px;color:#fff;"><span class="h">全局变量</span></div><svg class="a" style="left:28px;top:461px;" width="12" height="20" viewBox="0 0 12 20"><path d="M0 7H7.4L3.7 14.2Z" fill="#ebebeb"/></svg><svg class="a" style="left:43px;top:463px;overflow:visible" width="17" height="17" viewBox="0 0 17 17"><g transform="translate(0,1)"><path d="M0 1H4.6L6 2.6H9.5V5H3.5V10.5H0Z" fill="url(#lg)"/><rect x="4.2" y="5.2" width="8.6" height="8.6" fill="#efefef" stroke="#4a4a4a" stroke-width="0.6"/><path d="M5.6 7.2H7M8 7.2H11.6M5.6 9.5H7M8 9.5H11.6M5.6 11.8H7M8 11.8H11.6" stroke="#10309c" stroke-width="1.3"/></g></svg><div class="t" style="left:60px;top:460.5px;height:20px;line-height:20px;font-size:12px;color:#fff;letter-spacing:-0.135px;"><span class="h">用户</span>POU</div><svg class="a" style="left:47px;top:481px;" width="12" height="20" viewBox="0 0 12 20"><path d="M0 7H7.4L3.7 14.2Z" fill="#ebebeb"/></svg><svg class="a" style="left:62px;top:483px;overflow:visible" width="17" height="17" viewBox="0 0 17 17"><path d="M1 3H5.5L6.8 4.8H13V13.2H1Z" fill="url(#lg)"/></svg><div class="t" style="left:79px;top:480.5px;height:20px;line-height:20px;font-size:12px;color:#fff;"><span class="h">主程序</span></div><div class="a" style="left:0px;top:501px;width:290px;height:20px;background:#6b6b6b;"></div><svg class="a" style="left:81px;top:503px;overflow:visible" width="17" height="17" viewBox="0 0 17 17"><rect x="0.5" y="1" width="10.6" height="13" fill="#dadada" stroke="#f2f2f2" stroke-width="1"/><path d="M3 3.5V11.8" stroke="#4a4a4a" stroke-width="1"/><path d="M4.6 4.2V6.6M6.2 4.2V6.6" stroke="#4a4a4a" stroke-width="0.9"/><path d="M7.4 4.2V6.6L9.2 5.4Z" fill="#4a4a4a"/><path d="M6.4 8.6L4.8 9.9L6.4 11.2M7.6 8.6L9.2 9.9L7.6 11.2" stroke="#4a4a4a" stroke-width="0.9" fill="none"/></svg><div class="t" style="left:98px;top:500.5px;height:20px;line-height:20px;font-size:12px;color:#fff;letter-spacing:0.077px;">MainACT (PG)</div><svg class="a" style="left:47px;top:521px;" width="12" height="20" viewBox="0 0 12 20"><path d="M0 6.8V14.2L7.4 10.5Z" fill="#ebebeb"/></svg><svg class="a" style="left:62px;top:523px;overflow:visible" width="17" height="17" viewBox="0 0 17 17"><path d="M1 3H5.5L6.8 4.8H13V13.2H1Z" fill="url(#lg)"/></svg><div class="t" style="left:79px;top:520.5px;height:20px;line-height:20px;font-size:12px;color:#fff;"><span class="h">运动程序</span></div><svg class="a" style="left:47px;top:541px;" width="12" height="20" viewBox="0 0 12 20"><path d="M0 6.8V14.2L7.4 10.5Z" fill="#ebebeb"/></svg><svg class="a" style="left:62px;top:543px;overflow:visible" width="17" height="17" viewBox="0 0 17 17"><path d="M1 3H5.5L6.8 4.8H13V13.2H1Z" fill="url(#lg)"/></svg><div class="t" style="left:79px;top:540.5px;height:20px;line-height:20px;font-size:12px;color:#fff;"><span class="h">通讯程序</span></div><svg class="a" style="left:47px;top:561px;" width="12" height="20" viewBox="0 0 12 20"><path d="M0 6.8V14.2L7.4 10.5Z" fill="#ebebeb"/></svg><svg class="a" style="left:62px;top:563px;overflow:visible" width="17" height="17" viewBox="0 0 17 17"><path d="M1 3H5.5L6.8 4.8H13V13.2H1Z" fill="url(#lg)"/></svg><div class="t" style="left:79px;top:560.5px;height:20px;line-height:20px;font-size:12px;color:#fff;"><span class="h">功能块</span></div><div class="a" style="left:295px;top:82px;width:1228px;height:23px;background:#383838;"></div><div class="a" style="left:296px;top:83.5px;width:96px;height:20px;background:#444444;"></div><svg class="a" style="left:302px;top:85px;overflow:visible" width="17" height="17" viewBox="0 0 17 17"><g transform="translate(-1,1)"><path d="M3.5 0.5H10.5V4.5H3.5Z" fill="#4a4a4a" stroke="#f4f4f4"/><rect x="5" y="2" width="4" height="1" fill="#6ea0ff"/><rect x="6" y="2" width="2" height="1" fill="#f4ec00"/><path d="M6.5 5V6.5H0.5V10.5H3" stroke="#f4f4f4" fill="none"/><path d="M3.5 8.5H6.5V13.5H3.5ZM9.5 8.5H12.5V13.5H9.5Z" fill="#5a5a5a" stroke="#f4f4f4"/><path d="M7 10.5H9M13 10.5H14" stroke="#f4f4f4"/></g></svg><div class="t" style="left:317.5px;top:84px;height:20px;line-height:20px;font-size:11px;color:#fff;letter-spacing:-0.536px;">EtherCAT</div><div class="a" style="left:394px;top:83.5px;width:132px;height:20px;background:#444444;"></div><svg class="a" style="left:399px;top:85px;overflow:visible" width="17" height="17" viewBox="0 0 17 17"><g transform="translate(-1,1)"><path d="M3.5 0.5H10.5V4.5H3.5Z" fill="#4a4a4a" stroke="#f4f4f4"/><rect x="5" y="2" width="4" height="1" fill="#6ea0ff"/><rect x="6" y="2" width="2" height="1" fill="#f4ec00"/><path d="M6.5 5V6.5H0.5V10.5H3" stroke="#f4f4f4" fill="none"/><path d="M3.5 8.5H6.5V13.5H3.5ZM9.5 8.5H12.5V13.5H9.5Z" fill="#5a5a5a" stroke="#f4f4f4"/><path d="M7 10.5H9M13 10.5H14" stroke="#f4f4f4"/></g></svg><div class="t" style="left:415.5px;top:84px;height:20px;line-height:20px;font-size:11px;color:#fff;letter-spacing:0.169px;">Modbus (COM1)</div><div class="a" style="left:528px;top:83.5px;width:109.5px;height:20px;background:#444444;"></div><svg class="a" style="left:533px;top:85px;overflow:visible" width="17" height="17" viewBox="0 0 17 17"><g transform="translate(-1,1)"><path d="M3.5 0.5H10.5V4.5H3.5Z" fill="#4a4a4a" stroke="#f4f4f4"/><rect x="5" y="2" width="4" height="1" fill="#6ea0ff"/><rect x="6" y="2" width="2" height="1" fill="#f4ec00"/><path d="M6.5 5V6.5H0.5V10.5H3" stroke="#f4f4f4" fill="none"/><path d="M3.5 8.5H6.5V13.5H3.5ZM9.5 8.5H12.5V13.5H9.5Z" fill="#5a5a5a" stroke="#f4f4f4"/><path d="M7 10.5H9M13 10.5H14" stroke="#f4f4f4"/></g></svg><div class="t" style="left:549.5px;top:84px;height:20px;line-height:20px;font-size:11px;color:#fff;letter-spacing:-0.070px;">ModbusTCP</div><div class="a" style="left:639px;top:83px;width:97.2px;height:21px;background:#6aaff2;"></div><svg class="a" style="left:645px;top:85.9px;overflow:visible" width="17" height="17" viewBox="0 0 17 17"><rect x="0.5" y="1" width="10.6" height="13" fill="#dadada" stroke="#4a4a4a" stroke-width="1"/><path d="M3 3.5V11.8" stroke="#4a4a4a" stroke-width="1"/><path d="M4.6 4.2V6.6M6.2 4.2V6.6" stroke="#4a4a4a" stroke-width="0.9"/><path d="M7.4 4.2V6.6L9.2 5.4Z" fill="#4a4a4a"/><path d="M6.4 8.6L4.8 9.9L6.4 11.2M7.6 8.6L9.2 9.9L7.6 11.2" stroke="#4a4a4a" stroke-width="0.9" fill="none"/></svg><div class="t" style="left:661.5px;top:84.1px;height:20px;line-height:20px;font-size:11px;color:#000;letter-spacing:-0.052px;font-weight:bold;">MainACT</div><svg class="a" style="left:718.5px;top:90.5px;" width="9" height="9" viewBox="0 0 9 9"><path d="M0.7 0.7L7.8 7.8M7.8 0.7L0.7 7.8" stroke="#4c4c4c" stroke-width="1.4"/></svg><div class="a" style="left:738px;top:83.5px;width:100px;height:20px;background:#444444;"></div><svg class="a" style="left:743px;top:84.7px;overflow:visible" width="17" height="17" viewBox="0 0 17 17"><g transform="translate(1,2.3)"><rect x="0.5" y="0.5" width="9.3" height="11" fill="#c7c7c7" stroke="#e9e9e9"/><rect x="1.3" y="2" width="2.6" height="1.7" fill="#8a8a8a"/><rect x="1.3" y="8.1" width="2.6" height="1.7" fill="#8a8a8a"/><rect x="4" y="4.7" width="5" height="2.6" fill="#3a6ff7"/></g></svg><div class="a" style="left:758px;top:84px;width:60px;height:14.8px;overflow:hidden"><div class="t" style="left:1px;top:1.8px;height:16px;line-height:16px;font-size:13.3px;color:#fff;"><span class="h" style="letter-spacing:-0.33px">运动任务</span></div></div><div class="a" style="left:297px;top:105px;width:1096px;height:21px;background:#535353;border-top:1px solid #6a6a6a;box-sizing:border-box"></div><div class="a" style="left:297px;top:126px;width:1096px;height:61px;background:#e4e5e7;"></div><div class="a" style="left:297px;top:126px;width:35.5px;height:61px;background:#cdcdcd;"></div><div class="a" style="left:297px;top:146px;width:1096px;height:1px;background:#b4b4b4;"></div><div class="a" style="left:297px;top:166px;width:1096px;height:1px;background:#b4b4b4;"></div><div class="a" style="left:297px;top:186px;width:1096px;height:1px;background:#b4b4b4;"></div><div class="a" style="left:332px;top:105px;width:1px;height:21px;background:#737373;"></div><div class="a" style="left:332px;top:126px;width:1px;height:61px;background:#b9b9b9;"></div><div class="a" style="left:452px;top:105px;width:1px;height:21px;background:#737373;"></div><div class="a" style="left:452px;top:126px;width:1px;height:61px;background:#b9b9b9;"></div><div class="a" style="left:672px;top:105px;width:1px;height:21px;background:#737373;"></div><div class="a" style="left:672px;top:126px;width:1px;height:61px;background:#b9b9b9;"></div><div class="a" style="left:782px;top:105px;width:1px;height:21px;background:#737373;"></div><div class="a" style="left:782px;top:126px;width:1px;height:61px;background:#b9b9b9;"></div><div class="a" style="left:1032px;top:105px;width:1px;height:21px;background:#737373;"></div><div class="a" style="left:1032px;top:126px;width:1px;height:61px;background:#b9b9b9;"></div><div class="a" style="left:1142px;top:105px;width:1px;height:21px;background:#737373;"></div><div class="a" style="left:1142px;top:126px;width:1px;height:61px;background:#b9b9b9;"></div><div class="a" style="left:1392px;top:105px;width:1px;height:21px;background:#737373;"></div><div class="a" style="left:1392px;top:126px;width:1px;height:61px;background:#b9b9b9;"></div><div class="t" style="left:378.567px;top:106.3px;height:20px;line-height:20px;font-size:13.3px;color:#fff;"><span class="h" style="letter-spacing:0.27px">类别</span></div><div class="t" style="left:548.567px;top:106.3px;height:20px;line-height:20px;font-size:13.3px;color:#fff;"><span class="h" style="letter-spacing:0.27px">名称</span></div><div class="t" style="left:706.784px;top:106.3px;height:20px;line-height:20px;font-size:13.3px;color:#fff;"><span class="h" style="letter-spacing:0.27px">分配到</span></div><div class="t" style="left:893.567px;top:106.3px;height:20px;line-height:20px;font-size:13.3px;color:#fff;"><span class="h" style="letter-spacing:0.27px">类型</span></div><div class="t" style="left:1066.78px;top:106.3px;height:20px;line-height:20px;font-size:13.3px;color:#fff;"><span class="h" style="letter-spacing:0.27px">初始值</span></div><div class="t" style="left:1253.57px;top:106.3px;height:20px;line-height:20px;font-size:13.3px;color:#fff;"><span class="h" style="letter-spacing:0.27px">注释</span></div><div class="t" style="left:297px;top:126.3px;height:20px;line-height:20px;font-size:12px;color:#7a7a82;font-family:'Liberation Mono',monospace;width:35px;text-align:center;text-rendering:geometricPrecision;">1</div><div class="t" style="left:335px;top:126.3px;height:20px;line-height:20px;font-size:12px;color:#000;letter-spacing:-0.200px;font-family:'Liberation Mono',monospace;text-rendering:geometricPrecision;">VAR</div><svg class="a" style="left:478px;top:131px;" width="9" height="12" viewBox="0 0 9 12"><path d="M4.5 0.2L7.9 3.3L3.3 7L0.2 4.2Z" fill="#ff5cf0"/><circle cx="4.4" cy="1.9" r="0.48" fill="#4a3050"/><circle cx="5.7" cy="3.1" r="0.48" fill="#4a3050"/><circle cx="3.1" cy="3" r="0.48" fill="#4a3050"/><circle cx="4.4" cy="4.2" r="0.48" fill="#4a3050"/><circle cx="1.9" cy="4.1" r="0.48" fill="#4a3050"/><circle cx="3.1" cy="5.3" r="0.48" fill="#4a3050"/><circle cx="5.6" cy="4.4" r="0.48" fill="#4a3050"/><path d="M0.2 4.2L3.3 7V10.9L0.2 7.6Z" fill="#c6c6c6"/><path d="M7.9 3.3L3.3 7V10.9L7.9 6.4Z" fill="#d9d9d9"/><path d="M6.6 4.6L4 6.9V10L6.6 7.4Z" fill="#ff6a30"/></svg><div class="t" style="left:493px;top:126.3px;height:20px;line-height:20px;font-size:12px;color:#000;letter-spacing:-0.200px;font-family:'Liberation Mono',monospace;text-rendering:geometricPrecision;">TON0</div><div class="t" style="left:785px;top:126.3px;height:20px;line-height:20px;font-size:12px;color:#000;letter-spacing:-0.200px;font-family:'Liberation Mono',monospace;text-rendering:geometricPrecision;">TON</div><div class="t" style="left:1145px;top:126.3px;height:20px;line-height:20px;font-size:12px;color:#1d8a1d;letter-spacing:-0.200px;font-family:'Liberation Mono',monospace;text-rendering:geometricPrecision;">qwqq</div><div class="t" style="left:297px;top:147.3px;height:20px;line-height:20px;font-size:12px;color:#7a7a82;font-family:'Liberation Mono',monospace;width:35px;text-align:center;text-rendering:geometricPrecision;">2</div><div class="t" style="left:335px;top:147.3px;height:20px;line-height:20px;font-size:12px;color:#000;letter-spacing:-0.200px;font-family:'Liberation Mono',monospace;text-rendering:geometricPrecision;">VAR</div><svg class="a" style="left:478px;top:152px;" width="9" height="12" viewBox="0 0 9 12"><path d="M4.5 0.2L7.9 3.3L3.3 7L0.2 4.2Z" fill="#ff5cf0"/><circle cx="4.4" cy="1.9" r="0.48" fill="#4a3050"/><circle cx="5.7" cy="3.1" r="0.48" fill="#4a3050"/><circle cx="3.1" cy="3" r="0.48" fill="#4a3050"/><circle cx="4.4" cy="4.2" r="0.48" fill="#4a3050"/><circle cx="1.9" cy="4.1" r="0.48" fill="#4a3050"/><circle cx="3.1" cy="5.3" r="0.48" fill="#4a3050"/><circle cx="5.6" cy="4.4" r="0.48" fill="#4a3050"/><path d="M0.2 4.2L3.3 7V10.9L0.2 7.6Z" fill="#c6c6c6"/><path d="M7.9 3.3L3.3 7V10.9L7.9 6.4Z" fill="#d9d9d9"/><path d="M6.6 4.6L4 6.9V10L6.6 7.4Z" fill="#ff6a30"/></svg><div class="t" style="left:493px;top:147.3px;height:20px;line-height:20px;font-size:12px;color:#000;letter-spacing:-0.200px;font-family:'Liberation Mono',monospace;text-rendering:geometricPrecision;">CTU0</div><div class="t" style="left:785px;top:147.3px;height:20px;line-height:20px;font-size:12px;color:#000;letter-spacing:-0.200px;font-family:'Liberation Mono',monospace;text-rendering:geometricPrecision;">CTU</div><div class="t" style="left:297px;top:167.3px;height:20px;line-height:20px;font-size:12px;color:#7a7a82;font-family:'Liberation Mono',monospace;width:35px;text-align:center;text-rendering:geometricPrecision;">3</div><div class="t" style="left:335px;top:167.3px;height:20px;line-height:20px;font-size:12px;color:#000;letter-spacing:-0.200px;font-family:'Liberation Mono',monospace;text-rendering:geometricPrecision;">VAR</div><svg class="a" style="left:478px;top:172px;" width="9" height="12" viewBox="0 0 9 12"><path d="M4.5 0.2L7.9 3.3L3.3 7L0.2 4.2Z" fill="#ff5cf0"/><circle cx="4.4" cy="1.9" r="0.48" fill="#4a3050"/><circle cx="5.7" cy="3.1" r="0.48" fill="#4a3050"/><circle cx="3.1" cy="3" r="0.48" fill="#4a3050"/><circle cx="4.4" cy="4.2" r="0.48" fill="#4a3050"/><circle cx="1.9" cy="4.1" r="0.48" fill="#4a3050"/><circle cx="3.1" cy="5.3" r="0.48" fill="#4a3050"/><circle cx="5.6" cy="4.4" r="0.48" fill="#4a3050"/><path d="M0.2 4.2L3.3 7V10.9L0.2 7.6Z" fill="#c6c6c6"/><path d="M7.9 3.3L3.3 7V10.9L7.9 6.4Z" fill="#d9d9d9"/><path d="M6.6 4.6L4 6.9V10L6.6 7.4Z" fill="#ff6a30"/></svg><div class="t" style="left:493px;top:167.3px;height:20px;line-height:20px;font-size:12px;color:#000;letter-spacing:-0.200px;font-family:'Liberation Mono',monospace;text-rendering:geometricPrecision;">AA</div><div class="t" style="left:675px;top:167.3px;height:20px;line-height:20px;font-size:12px;color:#000;letter-spacing:-0.200px;font-family:'Liberation Mono',monospace;text-rendering:geometricPrecision;">%IX0.0</div><div class="t" style="left:785px;top:167.3px;height:20px;line-height:20px;font-size:12px;color:#000;letter-spacing:-0.200px;font-family:'Liberation Mono',monospace;text-rendering:geometricPrecision;">BOOL</div><div class="t" style="left:1145px;top:167.3px;height:20px;line-height:20px;font-size:12px;color:#1d8a1d;letter-spacing:-0.200px;font-family:'Liberation Mono',monospace;text-rendering:geometricPrecision;">dadad</div><svg class="a" style="left:460px;top:130px;" width="20" height="52" viewBox="0 0 20 52"><path d="M3.5 6V47M4 6.5H14M4 26.5H14M4 46.5H14" stroke="#989078" stroke-width="1" stroke-dasharray="1 1" fill="none" shape-rendering="crispEdges"/></svg><div class="a" style="left:1143px;top:167px;width:249px;height:19px;border:1px solid #6a9fd0;box-sizing:border-box"></div><div class="a" style="left:295px;top:284px;width:1228px;height:3px;background:#474747;"></div><div class="a" style="left:296px;top:282.7px;width:1227px;height:1px;background:#6a6a6a;"></div><div class="a" style="left:295px;top:287px;width:2px;height:353px;background:#4a4a4a;"></div><div class="a" style="left:297px;top:287px;width:1226px;height:20px;background:#73b8f3;"></div><div class="a" style="left:297px;top:307px;width:1226px;height:333px;background:#e4e5e7;"></div><div class="a" style="left:297px;top:311px;width:24px;height:161px;background:#73b8f3;"></div><div class="a" style="left:321px;top:311px;width:2px;height:161px;background:#4a4a4a;"></div><div class="a" style="left:298px;top:476px;width:1225px;height:1.5px;background:#b7b7b7;"></div><svg class="a" style="left:308px;top:293px;" width="13" height="8" viewBox="0 0 13 8"><path d="M0.5 0.8H12.3L6.4 7.2Z" fill="#4d4d4d"/></svg><div class="t" style="left:326.5px;top:287.8px;height:20px;line-height:20px;font-size:12.5px;color:#151515;font-weight:bold;"><span class="h" style="font-size:12.8px;letter-spacing:-0.3px">网络</span>1:</div><div class="t" style="left:384px;top:286px;height:20px;line-height:20px;font-size:11px;color:#222;letter-spacing:-0.200px;">...</div><svg class="a" style="left:325px;top:315px;" width="11" height="11" viewBox="0 0 11 11"><path d="M0.5 0.5H9.5V9.5H0.5Z" stroke="#a7b3ae" fill="none" shape-rendering="crispEdges"/><path d="M5.5 1V9M1 5.5H9" stroke="#a7b3ae" fill="none" shape-rendering="crispEdges"/></svg><svg class="a" style="left:297px;top:307px;" width="1226" height="170" viewBox="297 307 1226 170"><path d="M323 386H367M389 386H520M587 386H692M755 386H799" stroke="#4b4b4b" stroke-width="1.8"/><path d="M367 375V398M389 375V398" stroke="#4b4b4b" stroke-width="2"/><rect x="520.8" y="352.8" width="65.5" height="88.4" fill="none" stroke="#4b4b4b" stroke-width="1.9"/><rect x="692.8" y="352.8" width="61.5" height="109.4" fill="none" stroke="#4b4b4b" stroke-width="1.9"/><path d="M507 407H520M507 428H520M587 407H602M587 428H602M679 407H692M679 428H692M679 449H692M755 407H770M755 428H770" stroke="#4b4b4b" stroke-width="1.8"/></svg><div class="t" style="left:318px;top:327px;height:14px;line-height:14px;font-size:10.67px;color:#1a8c1a;letter-spacing:0.126px;width:120px;text-align:center;">dadad</div><div class="t" style="left:318px;top:341.4px;height:14px;line-height:14px;font-size:10.67px;color:#f26f6f;letter-spacing:-0.150px;width:120px;text-align:center;">%IX0.0</div><div class="t" style="left:318.3px;top:358.4px;height:14px;line-height:14px;font-size:10.67px;color:#3a3a3a;letter-spacing:1.033px;width:120px;text-align:center;">AA</div><div class="t" style="left:494px;top:319px;height:14px;line-height:14px;font-size:10.67px;color:#1a8c1a;letter-spacing:0.823px;width:120px;text-align:center;">qwqq</div><div class="t" style="left:493.8px;top:336.4px;height:14px;line-height:14px;font-size:10.67px;color:#1e1e1e;letter-spacing:-0.364px;width:120px;text-align:center;">TON0</div><div class="t" style="left:493px;top:356.341px;height:14px;line-height:14px;font-size:12px;color:#1e1e1e;letter-spacing:-0.177px;width:120px;text-align:center;">TON</div><div class="t" style="left:523px;top:380.4px;height:14px;line-height:14px;font-size:10.67px;color:#1e1e1e;letter-spacing:-0.761px;">EN</div><div class="t" style="left:463px;top:380.4px;height:14px;line-height:14px;font-size:10.67px;color:#1e1e1e;letter-spacing:-0.707px;width:120px;text-align:right;">ENO</div><div class="t" style="left:523px;top:401px;height:14px;line-height:14px;font-size:10.67px;color:#1e1e1e;letter-spacing:-0.735px;">IN</div><div class="t" style="left:463px;top:401px;height:14px;line-height:14px;font-size:10.67px;color:#1e1e1e;width:120px;text-align:right;">Q</div><div class="t" style="left:523px;top:422px;height:14px;line-height:14px;font-size:10.67px;color:#1e1e1e;letter-spacing:-0.717px;">PT</div><div class="t" style="left:463px;top:422px;height:14px;line-height:14px;font-size:10.67px;color:#1e1e1e;letter-spacing:-0.617px;width:120px;text-align:right;">ET</div><div class="t" style="left:384.3px;top:401px;height:14px;line-height:14px;font-size:10.67px;color:#1e1e1e;letter-spacing:-0.321px;width:120px;text-align:right;">NOT TON0.Q</div><div class="t" style="left:384.3px;top:422px;height:14px;line-height:14px;font-size:10.67px;color:#1e1e1e;letter-spacing:-0.126px;width:120px;text-align:right;">T#1S</div><div class="t" style="left:664px;top:336.4px;height:14px;line-height:14px;font-size:10.67px;color:#1e1e1e;letter-spacing:-0.341px;width:120px;text-align:center;">CTU0</div><div class="t" style="left:662.5px;top:356.341px;height:14px;line-height:14px;font-size:12px;color:#1e1e1e;letter-spacing:0.113px;width:120px;text-align:center;">CTU</div><div class="t" style="left:695px;top:380.4px;height:14px;line-height:14px;font-size:10.67px;color:#1e1e1e;letter-spacing:-0.761px;">EN</div><div class="t" style="left:631.5px;top:380.4px;height:14px;line-height:14px;font-size:10.67px;color:#1e1e1e;letter-spacing:-0.707px;width:120px;text-align:right;">ENO</div><div class="t" style="left:695px;top:401px;height:14px;line-height:14px;font-size:10.67px;color:#1e1e1e;letter-spacing:-0.956px;">CU</div><div class="t" style="left:631.5px;top:401px;height:14px;line-height:14px;font-size:10.67px;color:#1e1e1e;width:120px;text-align:right;">Q</div><div class="t" style="left:695px;top:422px;height:14px;line-height:14px;font-size:10.67px;color:#1e1e1e;letter-spacing:0.025px;">Reset</div><div class="t" style="left:631.5px;top:422px;height:14px;line-height:14px;font-size:10.67px;color:#1e1e1e;letter-spacing:-0.411px;width:120px;text-align:right;">CV</div><div class="t" style="left:695px;top:443px;height:14px;line-height:14px;font-size:10.67px;color:#1e1e1e;letter-spacing:-0.717px;">PV</div><div class="t" style="left:556px;top:401px;height:14px;line-height:14px;font-size:10.67px;color:#1e1e1e;letter-spacing:-0.203px;width:120px;text-align:right;">TON0.Q</div><div class="t" style="left:556px;top:443px;height:14px;line-height:14px;font-size:10.67px;color:#1e1e1e;letter-spacing:-0.134px;width:120px;text-align:right;">10</div><div class="a" style="left:784.2px;top:38.6px;width:45px;height:51.4px;border:4px solid #ed1c24;border-radius:2px;box-sizing:border-box"></div><div class="a" style="left:298px;top:161.2px;width:977.3px;height:40.8px;border:4px solid #ed1c24;border-radius:2px;box-sizing:border-box"></div><div class="a" style="left:340.2px;top:310.2px;width:77.8px;height:110.8px;border:4px solid #ed1c24;border-radius:2px;box-sizing:border-box"></div><div class="a" style="left:807px;top:106px;width:211px;height:41px;background:rgba(0,0,0,0.28);filter:blur(1.2px)"></div><div class="a" style="left:805px;top:103px;width:210.5px;height:41.5px;background:#4a4a4a;border:1px solid #6b6b6b;box-sizing:border-box"></div><svg class="a" style="left:812px;top:108px;" width="16" height="17" viewBox="0 0 16 17"><ellipse cx="8.6" cy="3.9" rx="7" ry="3.9" fill="#fff"/><path d="M6.3 6.5L8.6 10L11 6.5Z" fill="#fff"/><rect x="4.7" y="3.1" width="1.8" height="1.8" fill="#14145a"/><rect x="7.7" y="3.1" width="1.8" height="1.8" fill="#14145a"/><rect x="10.7" y="3.1" width="1.8" height="1.8" fill="#14145a"/><path d="M0 12.8H3" stroke="#d0d0d0" stroke-width="1"/><path d="M2.6 12.8L7.4 9.4L8.6 11L9.8 9.4H14.8V16H7.4Z" fill="#cdcdcd"/></svg><div class="t" style="left:837px;top:105.3px;height:18px;line-height:18px;font-size:13px;color:#fff;font-weight:bold;"><span class="h" style="font-size:14px">显示</span>/<span class="h" style="font-size:14px">隐藏参数的注释和地址</span></div><div class="t" style="left:837px;top:124px;height:18px;line-height:18px;font-size:12.5px;color:#fff;"><span class="h" style="font-size:13.2px">显示</span>/<span class="h" style="font-size:13.2px">隐藏参数的注释和地址</span></div><div class="a" style="left:798.5px;top:98.5px;width:236.7px;height:53.5px;border:4px solid #ed1c24;border-radius:2px;box-sizing:border-box"></div>
</body></html>
